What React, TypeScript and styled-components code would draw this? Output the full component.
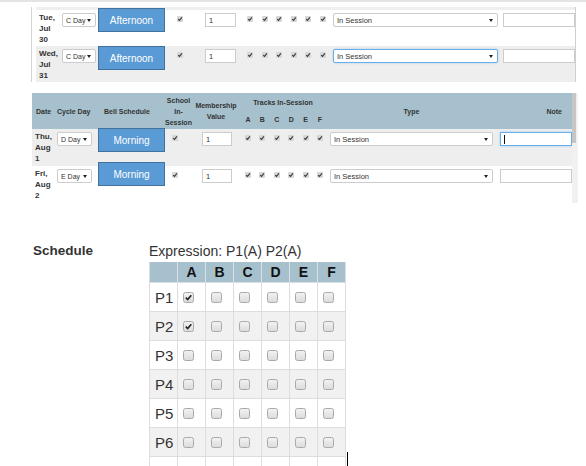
import React from 'react';
import styled, { createGlobalStyle } from 'styled-components';

const GlobalStyle = createGlobalStyle`
  html, body {
    margin: 0;
    padding: 0;
    background: #fff;
    overflow: hidden;
  }
  body {
    font-family: "Liberation Sans", Arial, sans-serif;
    color: #333;
  }
`;

type Layout = {
  grid: string;
  datePad: number;
  cycle: [number, number];
  bell: number;
  school: number;
  member: [number, number];
  tracks: [number, number];
  type: [number, number];
  note: [number, number];
};

type Day = {
  dow: string;
  month: string;
  date: string;
  cycle: string;
  bell: string;
  lift: number;
  shade: boolean;
  focus?: 'type' | 'note';
};

const TRACKS = ['A', 'B', 'C', 'D', 'E', 'F'];

const julyLayout: Layout = {
  grid: '24px 38px 68px 34px 40px 88px 172px 75px',
  datePad: 3,
  cycle: [2, 34],
  bell: 0,
  school: 11,
  member: [5, 31],
  tracks: [7, 8.5],
  type: [5, 165],
  note: [3, 72],
};

const augustLayout: Layout = {
  grid: '23px 40px 70px 27px 48px 86px 171px 75px',
  datePad: 3,
  cycle: [2, 35],
  bell: 3,
  school: 7,
  member: [10, 30],
  tracks: [5, 8.4],
  type: [4, 163],
  note: [3, 72],
};

const julyDays: Day[] = [
  { dow: 'Tue,', month: 'Jul', date: '30', cycle: 'C Day', bell: 'Afternoon', lift: 2, shade: false },
  { dow: 'Wed,', month: 'Jul', date: '31', cycle: 'C Day', bell: 'Afternoon', lift: 0, shade: true, focus: 'type' },
];

const augustDays: Day[] = [
  { dow: 'Thu,', month: 'Aug', date: '1', cycle: 'D Day', bell: 'Morning', lift: 1, shade: true, focus: 'note' },
  { dow: 'Fri,', month: 'Aug', date: '2', cycle: 'E Day', bell: 'Morning', lift: 4, shade: false },
];

// the last period row only peeks in at the bottom, so it carries no label
const PERIODS = ['P1', 'P2', 'P3', 'P4', 'P5', 'P6', ''];
const picked: Record<string, string[]> = { P1: ['A'], P2: ['A'] };

const Tick = () => (
  <TickBox>
    <svg width="6" height="6" viewBox="0 0 6 6">
      <path d="M1.2 3.1 L2.5 4.4 L4.9 1.4" stroke="#3a3a3a" strokeWidth="1.1" fill="none" />
    </svg>
  </TickBox>
);

const DayRow = ({ day, layout, height }: { day: Day; layout: Layout; height: number }) => (
  <Row $cols={layout.grid} $shade={day.shade} $h={height}>
    <DateCell $pad={layout.datePad}>
      {day.dow}
      <br />
      {day.month}
      <br />
      {day.date}
    </DateCell>
    <Cell $pad={layout.cycle[0]}>
      <Picker $w={layout.cycle[1]} $size={7}>
        <span>{day.cycle}</span>
        <Caret />
      </Picker>
    </Cell>
    <Cell $pad={layout.bell}>
      <BellButton $lift={day.lift}>{day.bell}</BellButton>
    </Cell>
    <Cell $pad={layout.school}>
      <Tick />
    </Cell>
    <Cell $pad={layout.member[0]}>
      <Field $w={layout.member[1]}>1</Field>
    </Cell>
    <Cell>
      <TrackSet $pad={layout.tracks[0]} $gap={layout.tracks[1]}>
        {TRACKS.map(t => (
          <Tick key={t} />
        ))}
      </TrackSet>
    </Cell>
    <Cell $pad={layout.type[0]}>
      <Picker $w={layout.type[1]} $size={7.5} $focus={day.focus === 'type'}>
        <span>In Session</span>
        <Caret />
      </Picker>
    </Cell>
    <Cell $pad={layout.note[0]}>
      <Field $w={layout.note[1]} $focus={day.focus === 'note'}>
        {day.focus === 'note' && <TypingCaret />}
      </Field>
    </Cell>
  </Row>
);

export default function App() {
  return (
    <Page>
      <GlobalStyle />
      <TopBand />

      <JulyPanel>
        <PanelCap />
        {julyDays.map(d => (
          <DayRow key={d.dow} day={d} layout={julyLayout} height={36} />
        ))}
      </JulyPanel>

      <AugustPanel>
        <TableBody>
          <HeaderRow $cols={augustLayout.grid}>
            <HeadText $pad={4}>Date</HeadText>
            <HeadText $pad={2}>Cycle Day</HeadText>
            <HeadText $pad={9}>Bell Schedule</HeadText>
            <HeadText $center>
              School
              <br />
              In-
              <br />
              Session
            </HeadText>
            <HeadText $center>
              Membership
              <br />
              Value
            </HeadText>
            <TracksHead>
              <HeadText $center>Tracks In-Session</HeadText>
              <TrackSet $pad={augustLayout.tracks[0]} $gap={augustLayout.tracks[1]}>
                {TRACKS.map(t => (
                  <TrackLetter key={t}>{t}</TrackLetter>
                ))}
              </TrackSet>
            </TracksHead>
            <HeadText $center>Type</HeadText>
            <HeadText $right>Note</HeadText>
          </HeaderRow>
          {augustDays.map(d => (
            <DayRow key={d.dow} day={d} layout={augustLayout} height={37} />
          ))}
        </TableBody>
        <Scrollbar>
          <Thumb />
        </Scrollbar>
      </AugustPanel>

      <ScheduleSection>
        <SectionLabel>Schedule</SectionLabel>
        <div>
          <Expression>Expression: P1(A) P2(A)</Expression>
          <PeriodGrid>
            <HeadCell />
            {TRACKS.map(t => (
              <HeadCell key={t}>{t}</HeadCell>
            ))}
            {PERIODS.map((p, i) => (
              <React.Fragment key={p || i}>
                <PeriodCell $shade={i % 2 === 1}>{p}</PeriodCell>
                {TRACKS.map(t => (
                  <BoxCell key={t} $shade={i % 2 === 1}>
                    <CheckBox>
                      {picked[p]?.includes(t) && (
                        <svg width="9" height="9" viewBox="0 0 9 9">
                          <path d="M1.8 4.6 L3.7 6.5 L7.3 2.2" stroke="#222" strokeWidth="1.6" fill="none" />
                        </svg>
                      )}
                    </CheckBox>
                  </BoxCell>
                ))}
              </React.Fragment>
            ))}
          </PeriodGrid>
        </div>
      </ScheduleSection>

      <TextCursor />
    </Page>
  );
}

const Page = styled.div`
  position: relative;
  width: 586px;
  height: 466px;
  overflow: hidden;
`;

const TopBand = styled.div`
  height: 2px;
  background: #e4e4e4;
`;

const JulyPanel = styled.div`
  margin: 5px 0 0 31px;
  width: 545px;
  box-sizing: border-box;
  border-left: 1px solid #d4d4d4;
  border-right: 1px solid #cfcfcf;
  padding-left: 4px;
`;

const PanelCap = styled.div`
  height: 3px;
  background: #efefef;
`;

const AugustPanel = styled.div`
  margin: 11px 0 0 32px;
  display: flex;
  align-items: stretch;
`;

const TableBody = styled.div`
  width: 540px;
`;

const Scrollbar = styled.div`
  width: 6px;
  background: #f1f1f1;
`;

const Thumb = styled.div`
  width: 4px;
  height: 50px;
  background: #c6c6c6;
`;

const Row = styled.div<{ $cols: string; $shade: boolean; $h: number }>`
  display: grid;
  grid-template-columns: ${p => p.$cols};
  align-items: start;
  height: ${p => p.$h}px;
  background: ${p => (p.$shade ? '#eeeeee' : '#fff')};
`;

const HeaderRow = styled.div<{ $cols: string }>`
  display: grid;
  grid-template-columns: ${p => p.$cols};
  align-items: center;
  height: 36px;
  background: #a6c1cd;
`;

const HeadText = styled.div<{ $pad?: number; $center?: boolean; $right?: boolean }>`
  font-size: 7px;
  font-weight: bold;
  line-height: 11px;
  color: #333;
  white-space: nowrap;
  padding-left: ${p => p.$pad ?? 0}px;
  padding-right: ${p => (p.$right ? 10 : 0)}px;
  text-align: ${p => (p.$center ? 'center' : p.$right ? 'right' : 'left')};
`;

const TracksHead = styled.div`
  display: flex;
  flex-direction: column;
  gap: 6px;
`;

const TrackLetter = styled.span`
  width: 6px;
  font-size: 7px;
  font-weight: bold;
  line-height: 11px;
  text-align: center;
  color: #333;
`;

const Cell = styled.div<{ $pad?: number }>`
  display: flex;
  padding-left: ${p => p.$pad ?? 0}px;
`;

const DateCell = styled.div<{ $pad: number }>`
  padding: 2px 0 0 ${p => p.$pad}px;
  font-size: 8px;
  font-weight: bold;
  line-height: 11px;
  color: #333;
`;

const Picker = styled.div<{ $w: number; $size: number; $focus?: boolean }>`
  width: ${p => p.$w}px;
  height: 14px;
  margin-top: 3px;
  box-sizing: border-box;
  display: flex;
  align-items: center;
  justify-content: space-between;
  padding: 0 4px 0 3px;
  border: 1px solid ${p => (p.$focus ? '#66afe9' : '#cccccc')};
  box-shadow: ${p => (p.$focus ? '0 0 2px rgba(102, 175, 233, 0.6)' : 'none')};
  border-radius: 2px;
  background: #fff;
  font-size: ${p => p.$size}px;
  color: #333;
  white-space: nowrap;
`;

const Caret = styled.span`
  flex-shrink: 0;
  width: 0;
  height: 0;
  border-left: 2px solid transparent;
  border-right: 2px solid transparent;
  border-top: 3px solid #222;
`;

const Field = styled.div<{ $w: number; $focus?: boolean }>`
  width: ${p => p.$w}px;
  height: 14px;
  margin-top: 3px;
  box-sizing: border-box;
  display: flex;
  align-items: center;
  padding-left: 3px;
  border: 1px solid ${p => (p.$focus ? '#66afe9' : '#cccccc')};
  box-shadow: ${p => (p.$focus ? '0 0 2px rgba(102, 175, 233, 0.6)' : 'none')};
  background: #fff;
  font-size: 7.5px;
  color: #333;
`;

const TypingCaret = styled.span`
  width: 1px;
  height: 9px;
  background: #111;
`;

const BellButton = styled.div<{ $lift: number }>`
  width: 67px;
  height: 24px;
  margin-top: ${p => -p.$lift}px;
  box-sizing: border-box;
  display: flex;
  align-items: center;
  justify-content: center;
  background: #5b9bd5;
  border: 1px solid #41719c;
  color: #fff;
  font-size: 10px;
`;

const TickBox = styled.span`
  display: inline-flex;
  width: 6px;
  height: 6px;
  margin-top: 6px;
  background: #d6d6d6;
  border-radius: 1px;
`;

const TrackSet = styled.div<{ $pad: number; $gap: number }>`
  display: flex;
  padding-left: ${p => p.$pad}px;
  gap: ${p => p.$gap}px;
`;

const ScheduleSection = styled.div`
  display: flex;
  margin-top: 38px;
  padding-left: 33px;
`;

const SectionLabel = styled.div`
  width: 116px;
  font-size: 13.5px;
  font-weight: bold;
  line-height: 20px;
  color: #333;
`;

const Expression = styled.div`
  font-size: 14px;
  line-height: 20px;
  color: #333;
  margin-bottom: 1px;
`;

const PeriodGrid = styled.div`
  display: grid;
  grid-template-columns: repeat(7, 28px);
  border-left: 1px solid #dddddd;
`;

const HeadCell = styled.div`
  height: 21px;
  box-sizing: border-box;
  display: flex;
  align-items: center;
  justify-content: center;
  background: #a6c1cd;
  border-right: 1px solid #d8e0e4;
  border-bottom: 1px solid #d8e0e4;
  font-size: 14px;
  font-weight: bold;
  color: #111;
`;

const BodyCell = styled.div<{ $shade: boolean }>`
  height: 29px;
  box-sizing: border-box;
  display: flex;
  align-items: center;
  background: ${p => (p.$shade ? '#f1f1f1' : '#fff')};
  border-right: 1px solid #dddddd;
  border-bottom: 1px solid #dddddd;
`;

const PeriodCell = styled(BodyCell)`
  padding-left: 5px;
  font-size: 15px;
  color: #333;
`;

const BoxCell = styled(BodyCell)`
  padding-left: 5px;
`;

const CheckBox = styled.span`
  width: 11px;
  height: 11px;
  box-sizing: border-box;
  display: flex;
  align-items: center;
  justify-content: center;
  border: 1px solid #a9a9a9;
  border-radius: 2.5px;
  background: linear-gradient(#f2f2f2, #dcdcdc);
`;

const TextCursor = styled.div`
  position: absolute;
  left: 347px;
  top: 452px;
  width: 1px;
  height: 14px;
  background: #000;
`;
